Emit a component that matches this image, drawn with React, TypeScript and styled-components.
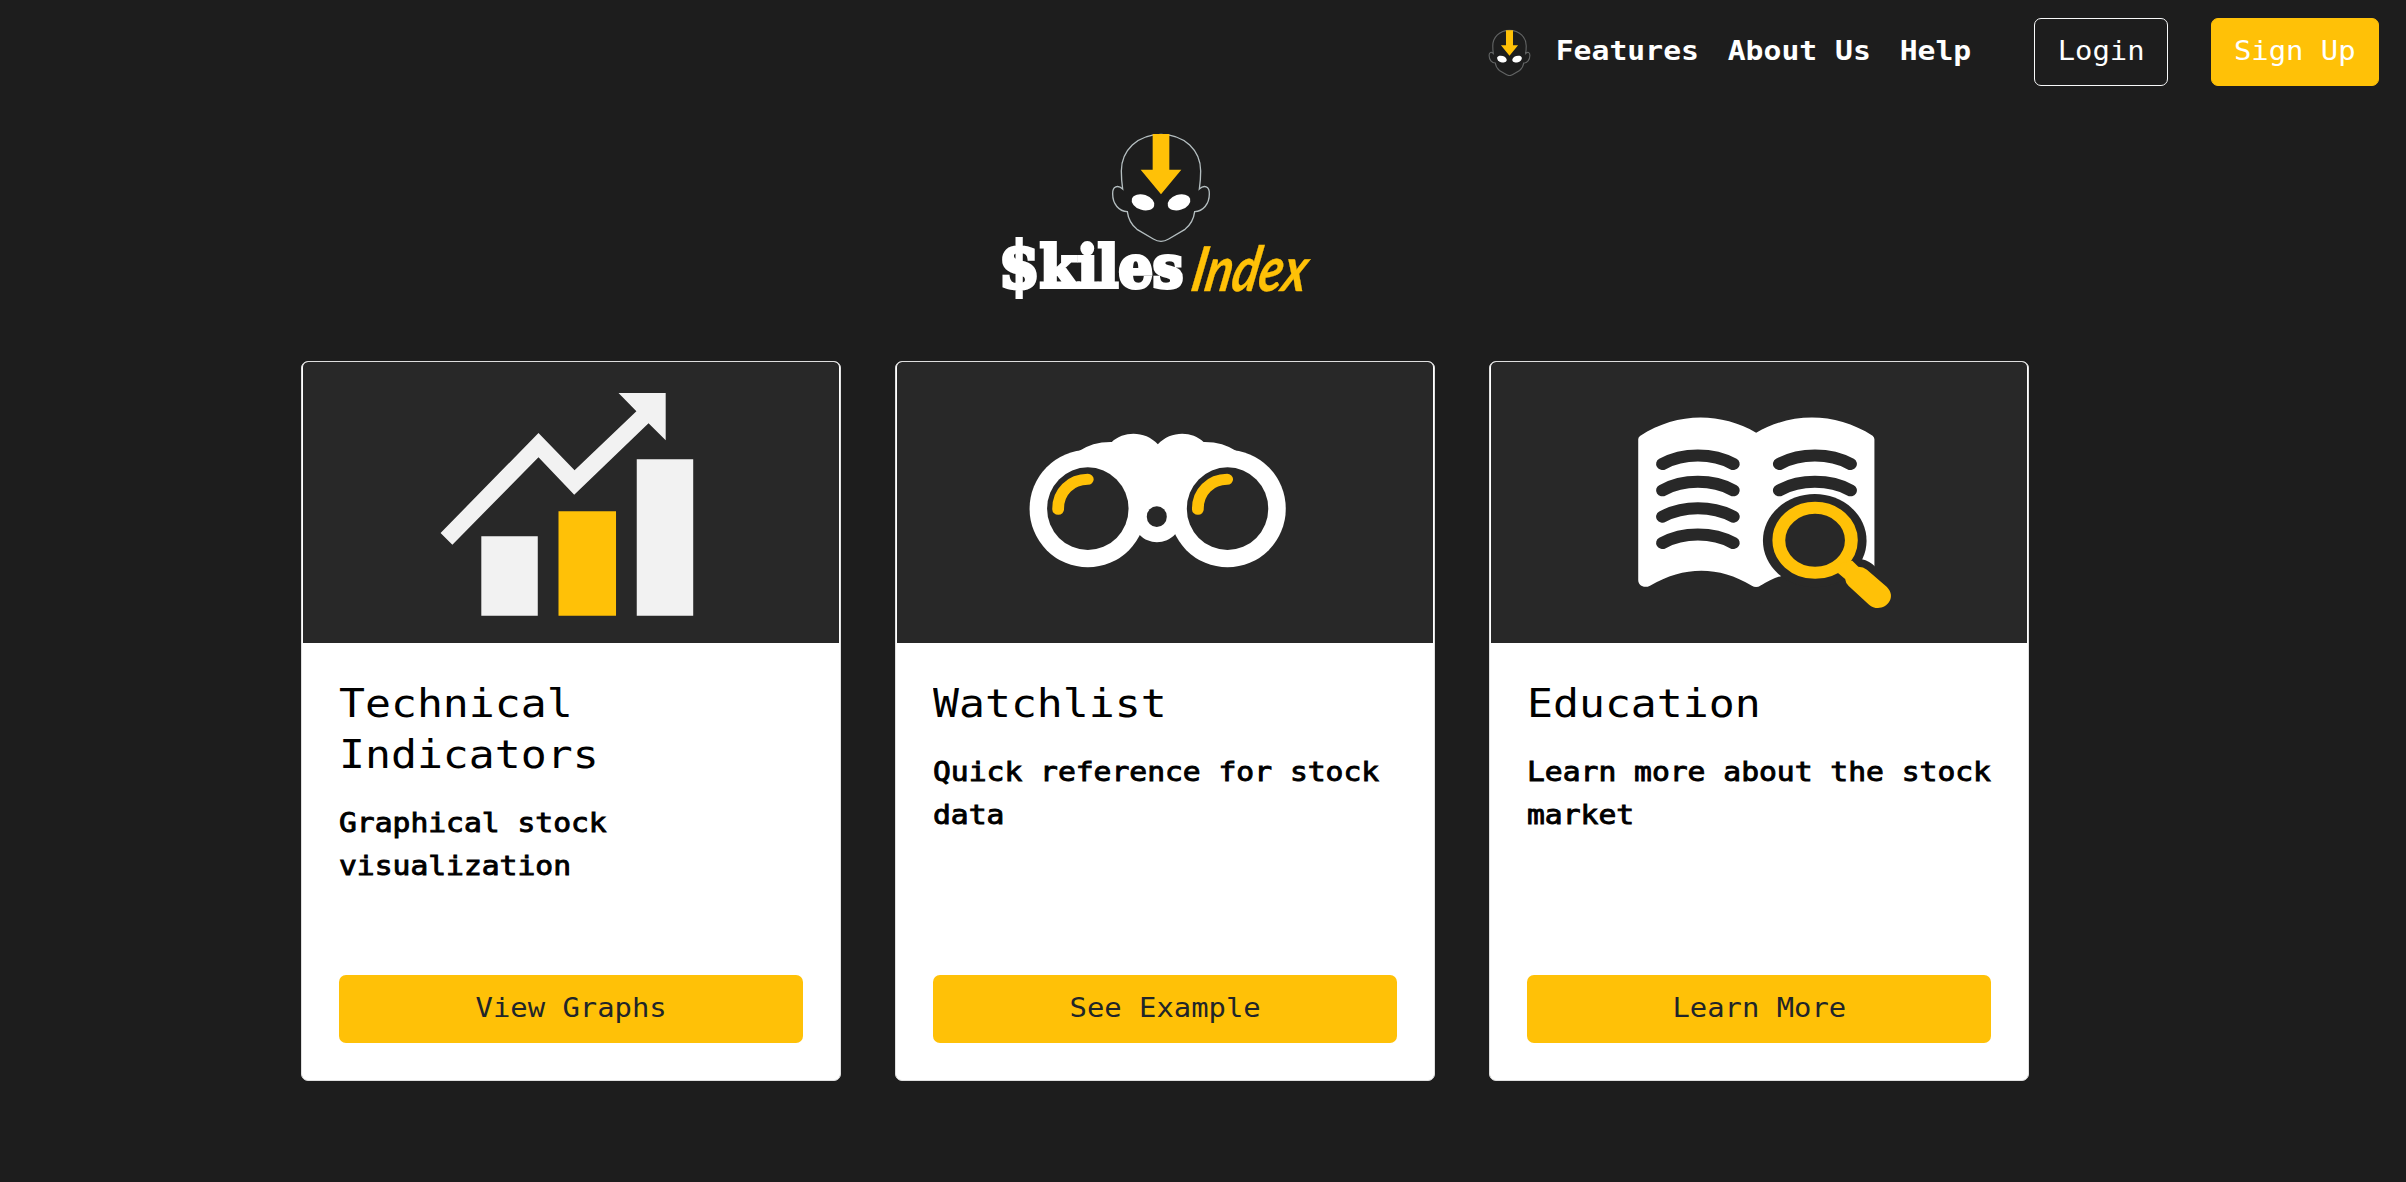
import React from "react";
import styled, { createGlobalStyle } from "styled-components";

const YELLOW = "#ffc107";
const INK = "#282828";

const GlobalStyle = createGlobalStyle`
  *, *::before, *::after { box-sizing: border-box; }
  body {
    margin: 0;
    background: #1d1d1d;
    font-family: "DejaVu Sans Mono", "Liberation Mono", monospace;
  }
`;

const Page = styled.div`
  min-height: 1182px;
  background: #1d1d1d;
`;

const NavBar = styled.nav`
  display: flex;
  justify-content: flex-end;
  align-items: center;
  height: 104px;
  padding-right: 27px;
`;

const NavLinks = styled.div`
  display: flex;
  gap: 25.1px;
  margin: 0 62.5px 0 77.3px;
  padding-bottom: 2px;
  transform: scaleX(1.144);
  transform-origin: right;
`;

const NavLink = styled.a`
  color: #fff;
  font-size: 26px;
  font-weight: 700;
  line-height: 39px;
  white-space: nowrap;
  text-decoration: none;
`;

const NavButton = styled.button<{ $filled?: boolean }>`
  width: ${(p) => (p.$filled ? 168 : 134)}px;
  height: 68px;
  margin-left: ${(p) => (p.$filled ? 43 : 0)}px;
  padding: 0 0 2px;
  border: 1px solid ${(p) => (p.$filled ? YELLOW : "#f8f9fa")};
  border-radius: 7px;
  background: ${(p) => (p.$filled ? YELLOW : "transparent")};
  color: #fff;
  font: 26px "DejaVu Sans Mono", monospace;
  white-space: nowrap;
`;

const ButtonLabel = styled.span`
  display: inline-block;
  transform: scaleX(1.11);
`;

const Main = styled.main`
  width: 1727.4px;
  margin-left: 301.3px;
`;

const Hero = styled.header`
  display: flex;
  justify-content: center;
  padding: 16px 0 31px;
`;

const CardRow = styled.section`
  display: grid;
  grid-template-columns: repeat(3, 539.6px);
  justify-content: space-between;
`;

const Card = styled.article`
  display: flex;
  flex-direction: column;
  height: 720px;
  border: 1px solid #dfdfdf;
  border-radius: 7px;
  background: #fff;
  overflow: hidden;
`;

const CardImage = styled.div`
  display: flex;
  width: 536px;
  height: 281px;
  margin: 0 auto;
  border-radius: 5px 5px 0 0;
  background: ${INK};
`;

const CardBody = styled.div`
  display: flex;
  flex: 1;
  flex-direction: column;
  padding: 35px 36.8px 37px;
`;

const CardTitle = styled.h2`
  width: calc(100% / 1.12);
  margin: 0 0 22px;
  color: #000;
  font-size: 38.5px;
  font-weight: 400;
  line-height: 51px;
  transform: scaleX(1.12);
  transform-origin: left;
`;

const CardText = styled.p`
  width: calc((100% + 8px) / 1.14);
  margin: 0;
  color: #000;
  font-size: 26px;
  font-weight: 400;
  line-height: 43px;
  -webkit-text-stroke: 0.9px #000;
  transform: scaleX(1.14);
  transform-origin: left;
`;

const CardButton = styled.button`
  height: 68px;
  margin-top: auto;
  padding: 0 0 2px;
  border: 0;
  border-radius: 7px;
  background: ${YELLOW};
  color: #212529;
  font: 26px "DejaVu Sans Mono", monospace;
`;

function Head({ stroke, width }: { stroke: string; width: number }) {
  return (
    <g>
      <path
        d="M543 43C472 43 424 92 424 153Q424 180 428 207C414 194 397 198 398 222C398 252 417 274 442 275C445 299 456 316 471 328L520 357Q543 371 566 357L615 328C630 316 641 299 644 275C669 274 688 252 688 222C689 198 672 194 658 207Q662 180 662 153C662 92 614 43 543 43Z"
        fill="none"
        stroke={stroke}
        strokeWidth={width}
      />
      <path d="M518 42H568V149H604L543 223L482 149H518Z" fill={YELLOW} />
      <ellipse cx="489" cy="247" rx="35" ry="23" transform="rotate(18 489 247)" fill="#fff" />
      <ellipse cx="597" cy="247" rx="35" ry="23" transform="rotate(-18 597 247)" fill="#fff" />
    </g>
  );
}

function NavLogo() {
  return (
    <svg width="43" height="47" viewBox="390 33 306 334" preserveAspectRatio="none">
      <Head stroke="#626464" width={8} />
    </svg>
  );
}

const HeroSvg = styled.svg`
  width: 390px;
  height: 210px;
  overflow: visible;
`;

function HeroLogo() {
  return (
    <HeroSvg viewBox="-30 0 1170 630">
      <Head stroke="#b4bec0" width={4} />
      <g fill="#fff" stroke="#fff" strokeWidth="12" fontFamily="DejaVu Serif" fontWeight="700" fontSize="176">
        <text x="56" y="502" textLength="554" lengthAdjust="spacingAndGlyphs">
          <tspan fontSize="192">$</tspan>kiles
        </text>
      </g>
      <g fill={YELLOW} stroke={YELLOW} strokeWidth="1" fontFamily="Lato" fontStyle="italic" fontWeight="700" fontSize="186">
        <text transform="translate(628 512) skewX(-11)" textLength="344" lengthAdjust="spacingAndGlyphs">Index</text>
      </g>
    </HeroSvg>
  );
}

const Art = styled.svg.attrs({ preserveAspectRatio: "none" })`
  width: 536px;
  height: 281px;
`;

function GraphArt() {
  return (
    <Art viewBox="36 36 1500 843">
      <g fill="#f2f2f2">
        <path d="M421 549L695 249L796 361L969 184L919 129H1051V271L1003 220L795 434L695 322L454 584Z" />
        <path d="M535 559H693V797H535ZM970 328H1128V797H970Z" />
      </g>
      <path d="M751 484H912V797H751Z" fill={YELLOW} />
    </Art>
  );
}

function BinocularsArt() {
  return (
    <Art viewBox="20 36 1500 843">
      <g fill="#fff">
        <ellipse cx="554" cy="476" rx="163" ry="176" />
        <ellipse cx="945" cy="476" rx="163" ry="176" />
        <path d="M528 304Q568 275 621 276C655 242 715 242 750 283C785 242 845 242 878 276Q931 275 971 304L900 500L799 552C773 584 725 584 700 556L600 500Z" />
      </g>
      <g fill={INK}>
        <ellipse cx="554" cy="476" rx="114" ry="124" />
        <ellipse cx="945" cy="476" rx="114" ry="124" />
        <ellipse cx="747" cy="500" rx="28" ry="31" />
      </g>
      <g fill="none" stroke={YELLOW} strokeWidth="33" strokeLinecap="round">
        <path d="M471 478C470 425 507 388 554 388" />
        <path d="M862 478C861 425 898 388 944 388" />
      </g>
    </Art>
  );
}

function BookArt() {
  return (
    <Art viewBox="31 36 1500 843">
      <path
        d="M443 268Q443 262 448 258C551 186 672 186 773 248C874 186 995 186 1099 257Q1104 262 1104 268V690H830L785 707Q773 715 761 707C668 647 572 647 476 707C460 716 443 707 443 690Z"
        fill="#fff"
      />
      <path d="M785 707C806 693 824 684 846 677L900 640L1069 628Q1090 632 1108 652V760H785Z" fill={INK} />
      <g fill="none" stroke={INK} strokeWidth="36" strokeLinecap="round">
        <path d="M511 342C568 308 652 308 709 342" />
        <path d="M511 421C568 387 652 387 709 421" />
        <path d="M511 500C568 466 652 466 709 500" />
        <path d="M511 579C568 545 652 545 709 579" />
        <path d="M838 342C895 308 980 308 1037 342" />
        <path d="M838 421C895 387 980 387 1037 421" />
      </g>
      <ellipse cx="937" cy="572" rx="145" ry="140" fill={INK} />
      <ellipse cx="938" cy="571" rx="101.500" ry="97.500" fill="none" stroke={YELLOW} strokeWidth="36" />
      <path
        d="M1042 632L1059 650Q1073 650 1083 659L1139 711C1166 741 1140 774 1114 774Q1100 774 1089 764L1032 708Q1023 698 1022 687L1002 669L1010 640Z"
        fill={YELLOW}
      />
    </Art>
  );
}

const cards = [
  { title: "Technical Indicators", text: "Graphical stock visualization", action: "View Graphs", Picture: GraphArt },
  { title: "Watchlist", text: "Quick reference for stock data", action: "See Example", Picture: BinocularsArt },
  { title: "Education", text: "Learn more about the stock market", action: "Learn More", Picture: BookArt },
];

export default function App() {
  return (
    <Page>
      <GlobalStyle />
      <NavBar>
        <NavLogo />
        <NavLinks>
          <NavLink>Features</NavLink>
          <NavLink>About Us</NavLink>
          <NavLink>Help</NavLink>
        </NavLinks>
        <NavButton>
          <ButtonLabel>Login</ButtonLabel>
        </NavButton>
        <NavButton $filled>
          <ButtonLabel>Sign Up</ButtonLabel>
        </NavButton>
      </NavBar>
      <Main>
        <Hero>
          <HeroLogo />
        </Hero>
        <CardRow>
          {cards.map(({ title, text, action, Picture }) => (
            <Card key={title}>
              <CardImage>
                <Picture />
              </CardImage>
              <CardBody>
                <CardTitle>{title}</CardTitle>
                <CardText>{text}</CardText>
                <CardButton>
                  <ButtonLabel>{action}</ButtonLabel>
                </CardButton>
              </CardBody>
            </Card>
          ))}
        </CardRow>
      </Main>
    </Page>
  );
}
